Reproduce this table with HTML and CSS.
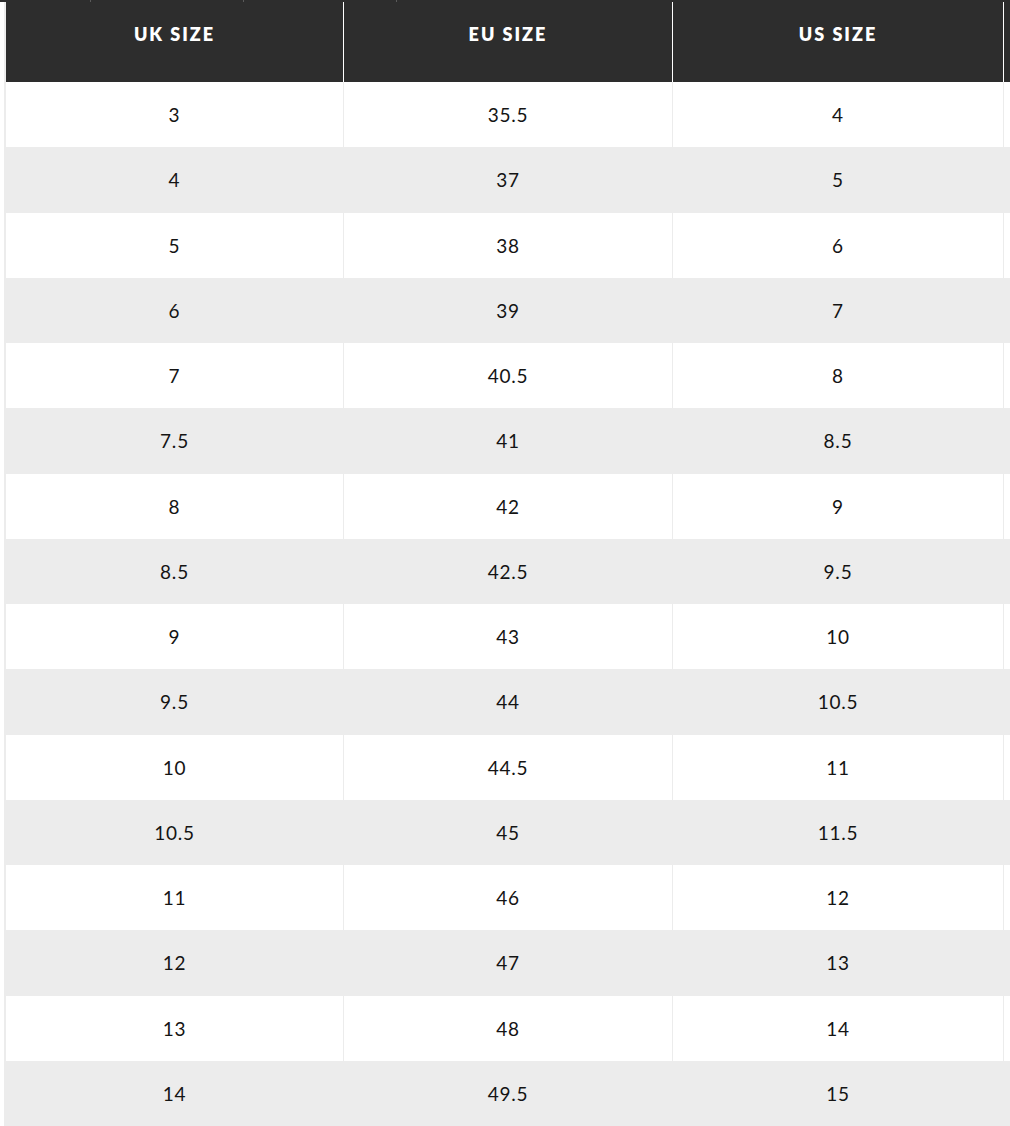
FILE: index.html
```html
<!DOCTYPE html>
<html lang="en">
<head>
<meta charset="utf-8">
<title>Size Guide</title>
<link rel="stylesheet" href="styles.css">
</head>
<body>
<div class="topbar"><span class="seg seg1"></span><span class="seg seg2"></span><span class="seg seg3"></span></div>
<div class="wrap">
  <div class="chart" role="table">
    <div class="row head" role="row">
      <div class="cell" role="columnheader">UK SIZE</div>
      <div class="cell" role="columnheader">EU SIZE</div>
      <div class="cell" role="columnheader">US SIZE</div>
      <div class="cell" role="columnheader"></div>
    </div>
    <div class="row" role="row"><div class="cell">3</div><div class="cell">35.5</div><div class="cell">4</div><div class="cell"></div></div>
    <div class="row alt" role="row"><div class="cell">4</div><div class="cell">37</div><div class="cell">5</div><div class="cell"></div></div>
    <div class="row" role="row"><div class="cell">5</div><div class="cell">38</div><div class="cell">6</div><div class="cell"></div></div>
    <div class="row alt" role="row"><div class="cell">6</div><div class="cell">39</div><div class="cell">7</div><div class="cell"></div></div>
    <div class="row" role="row"><div class="cell">7</div><div class="cell">40.5</div><div class="cell">8</div><div class="cell"></div></div>
    <div class="row alt" role="row"><div class="cell">7.5</div><div class="cell">41</div><div class="cell">8.5</div><div class="cell"></div></div>
    <div class="row" role="row"><div class="cell">8</div><div class="cell">42</div><div class="cell">9</div><div class="cell"></div></div>
    <div class="row alt" role="row"><div class="cell">8.5</div><div class="cell">42.5</div><div class="cell">9.5</div><div class="cell"></div></div>
    <div class="row" role="row"><div class="cell">9</div><div class="cell">43</div><div class="cell">10</div><div class="cell"></div></div>
    <div class="row alt" role="row"><div class="cell">9.5</div><div class="cell">44</div><div class="cell">10.5</div><div class="cell"></div></div>
    <div class="row" role="row"><div class="cell">10</div><div class="cell">44.5</div><div class="cell">11</div><div class="cell"></div></div>
    <div class="row alt" role="row"><div class="cell">10.5</div><div class="cell">45</div><div class="cell">11.5</div><div class="cell"></div></div>
    <div class="row" role="row"><div class="cell">11</div><div class="cell">46</div><div class="cell">12</div><div class="cell"></div></div>
    <div class="row alt" role="row"><div class="cell">12</div><div class="cell">47</div><div class="cell">13</div><div class="cell"></div></div>
    <div class="row" role="row"><div class="cell">13</div><div class="cell">48</div><div class="cell">14</div><div class="cell"></div></div>
    <div class="row alt" role="row"><div class="cell">14</div><div class="cell">49.5</div><div class="cell">15</div><div class="cell"></div></div>
  </div>
</div>
</body>
</html>
```

FILE: styles.css
```css
html, body {
  margin: 0;
  padding: 0;
  background: #ffffff;
  overflow: hidden;
}

body {
  font-family: "Lato", "Liberation Sans", sans-serif;
  color: #141414;
}

.topbar {
  display: flex;
  height: 2px;
  background: #2d2d2d;
}

.seg {
  display: block;
  height: 2px;
  border-right: 1px solid #5a5a5a;
}

.seg1 { width: 90px; }
.seg2 { width: 152px; }
.seg3 { width: 152px; }

.wrap {
  padding-left: 4px;
}

.chart {
  border-left: 2px solid #ececec;
}

.row {
  display: grid;
  grid-template-columns: 338px 329px 331px minmax(0, 1fr);
  height: 65.25px;
  background: #ffffff;
}

.row.alt {
  background: #ececec;
}

.cell {
  box-sizing: border-box;
  border-right: 1px solid #ececec;
  display: flex;
  align-items: center;
  justify-content: center;
  font-size: 19px;
  letter-spacing: 0.8px;
  font-weight: 400;
}

.cell:last-child {
  border-right: 0;
}

.row.head {
  height: 80px;
  background: #2d2d2d;
}

.head .cell {
  align-items: flex-start;
  padding-top: 21px;
  line-height: 22px;
  color: #ffffff;
  font-weight: 800;
  font-size: 18px;
  letter-spacing: 2px;
  border-right: 1px solid #ffffff;
}

.head .cell:last-child {
  border-right: 0;
}
```
